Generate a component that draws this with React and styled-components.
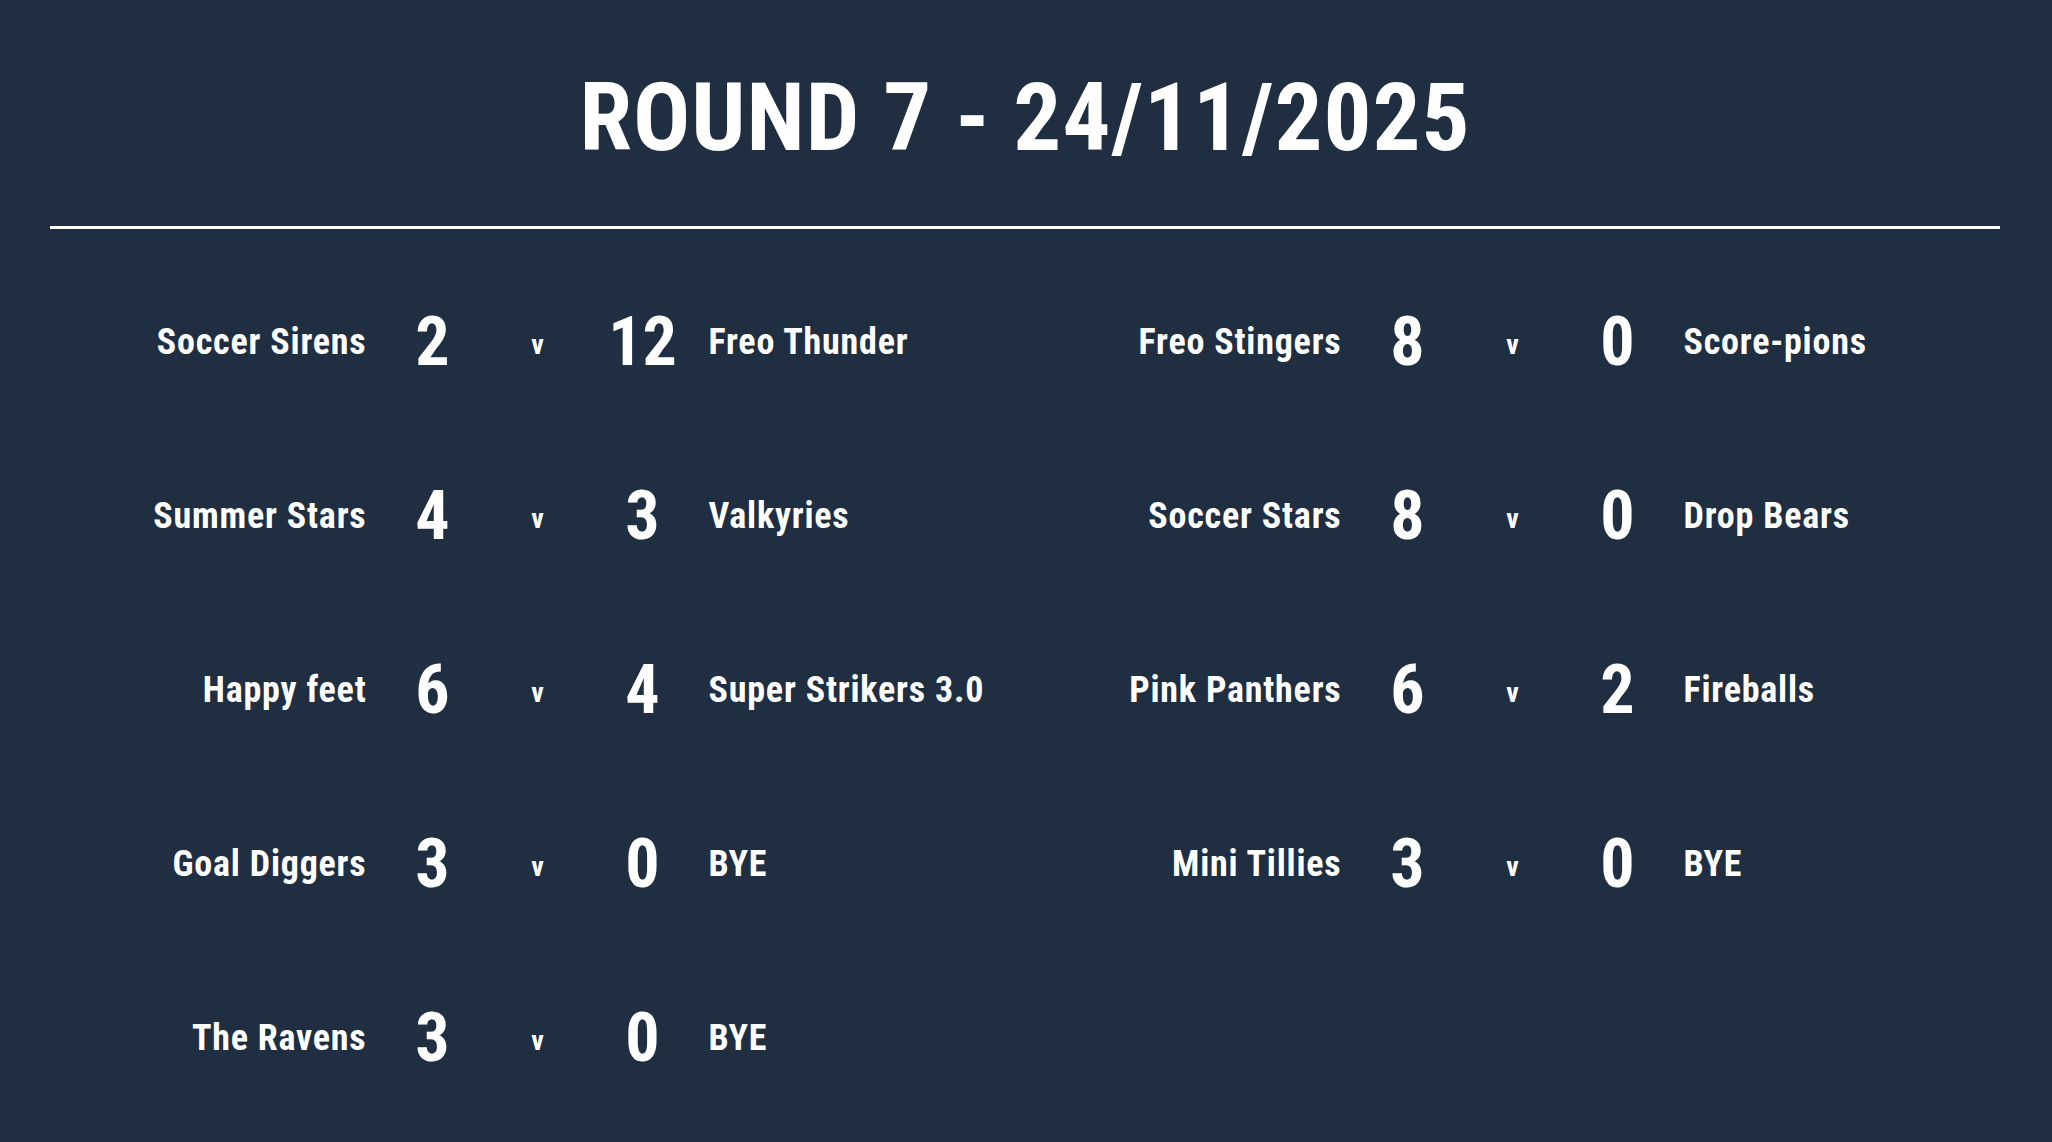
import React from "react";
import styled, { createGlobalStyle } from "styled-components";

const GlobalStyle = createGlobalStyle`
  html, body {
    margin: 0;
    padding: 0;
    background: #202e42;
  }
  body {
    font-family: Roboto, "Liberation Sans", sans-serif;
    font-stretch: 75%;
    color: #ffffff;
  }
`;

const Page = styled.main`
  width: 2052px;
  height: 1142px;
  box-sizing: border-box;
  padding: 70px 52px 0 50px;
  background: #202e42;
  overflow: hidden;
`;

const Title = styled.h1`
  margin: 0 0 61px;
  font-size: 95px;
  line-height: 1;
  font-weight: 700;
  font-stretch: 75%;
  letter-spacing: 1px;
  text-align: center;
`;

const Divider = styled.hr`
  margin: 0;
  border: none;
  height: 3px;
  background: #ffffff;
`;

const Columns = styled.section`
  display: grid;
  grid-template-columns: 1fr 1fr;
  padding-top: 26px;
`;

const Column = styled.div`
  display: flex;
  flex-direction: column;
`;

const Row = styled.div`
  display: grid;
  grid-template-columns: minmax(0, 1fr) 100px 78px 100px minmax(0, 1fr);
  column-gap: 16px;
  align-items: center;
  height: 174px;
`;

const Team = styled.span`
  font-size: 36px;
  line-height: 1;
  font-weight: 700;
  font-stretch: 75%;
  letter-spacing: 0.8px;
  white-space: nowrap;
  text-align: ${(p) => (p.$home ? "right" : "left")};
`;

const Score = styled.span`
  font-size: 68px;
  line-height: 1;
  font-weight: 700;
  font-stretch: 75%;
  text-align: center;
`;

const Versus = styled.span`
  font-size: 28px;
  line-height: 1;
  font-weight: 700;
  font-stretch: 75%;
  text-align: center;
  padding-top: 6px;
`;

const left = [
  ["Soccer Sirens", 2, 12, "Freo Thunder"],
  ["Summer Stars", 4, 3, "Valkyries"],
  ["Happy feet", 6, 4, "Super Strikers 3.0"],
  ["Goal Diggers", 3, 0, "BYE"],
  ["The Ravens", 3, 0, "BYE"],
];

const right = [
  ["Freo Stingers", 8, 0, "Score-pions"],
  ["Soccer Stars", 8, 0, "Drop Bears"],
  ["Pink Panthers", 6, 2, "Fireballs"],
  ["Mini Tillies", 3, 0, "BYE"],
];

function Match({ m }) {
  const [home, hs, as, away] = m;
  return (
    <Row>
      <Team $home>{home}</Team>
      <Score>{hs}</Score>
      <Versus>v</Versus>
      <Score>{as}</Score>
      <Team>{away}</Team>
    </Row>
  );
}

export default function App() {
  return (
    <>
      <GlobalStyle />
      <Page>
        <Title>ROUND 7 - 24/11/2025</Title>
        <Divider />
        <Columns>
          <Column>
            {left.map((m) => (
              <Match key={m[0]} m={m} />
            ))}
          </Column>
          <Column>
            {right.map((m) => (
              <Match key={m[0]} m={m} />
            ))}
          </Column>
        </Columns>
      </Page>
    </>
  );
}
